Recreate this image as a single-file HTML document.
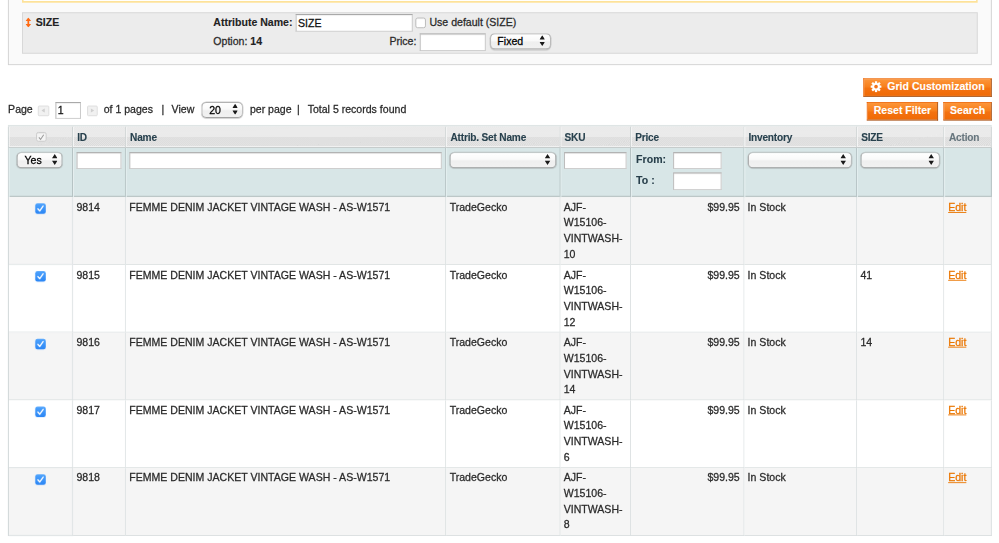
<!DOCTYPE html>
<html>
<head>
<meta charset="utf-8">
<title>Grid</title>
<style>
html,body{margin:0;padding:0;background:#fff;overflow:hidden;}
body{width:999px;height:543px;}
#clip{position:relative;width:999px;height:543px;overflow:hidden;}
#w{position:absolute;left:0;top:0;width:1135.2px;height:618px;transform:scale(0.88);transform-origin:0 0;
  font:12px/18px "Liberation Sans",Arial,Helvetica,sans-serif;color:#2a2a2a;-webkit-text-stroke-width:0.3px;}
#w *{box-sizing:border-box;}
#w b,#w th,#w .lbl,#w .btn,#w .bd{-webkit-text-stroke-width:0.12px;}
.abs{position:absolute;white-space:nowrap;}
/* top container */
#box{position:absolute;left:9.2px;top:-20px;width:1118.2px;height:94.4px;border:1.1px solid #d0d0d0;background:#fafafa;}
#ybox{position:absolute;left:25.2px;top:-20px;width:1086px;height:23px;background:#fffffd;box-shadow:inset 0 0 0 1.8px #fde29a;}
#gbox{position:absolute;left:25.2px;top:13.8px;width:1086px;height:47.2px;border:1px solid #d6d6d6;background:#ececec;}
input.t,.inp{position:absolute;background:#fff;border:1px solid #aaa;border-color:#9e9e9e #c4c4c4 #c8c8c8 #b4b4b4;box-shadow:inset 0 1px 1px rgba(0,0,0,.08);}
.sel{position:absolute;border:1px solid #a6a6a6;border-color:#adadad #a8a8a8 #9c9c9c #a8a8a8;border-radius:5.5px;
  background:linear-gradient(#ffffff 0%,#f9f9f9 45%,#efefef 55%,#f1f1f1 100%);box-shadow:0 0 0 .6px rgba(160,160,160,.5),0 1px 1.2px rgba(0,0,0,.1);
  font-size:12px;line-height:16px;color:#000;padding-left:7.6px;white-space:nowrap;}
.sel svg{position:absolute;right:5.2px;top:50%;margin-top:-6.8px;width:6.4px;height:12.4px;}
.cb{position:absolute;width:12px;height:12px;border-radius:2.6px;}
.cb.off{background:#fff;border:1px solid #b5b5b5;box-shadow:inset 0 1px 1px rgba(0,0,0,.06);}
.cb.on{background:linear-gradient(#4ea3fd,#2b86f5);}
.cb svg{position:absolute;left:0;top:0;width:12px;height:12px;}
/* buttons */
.btn{position:absolute;height:21px;border:1px solid #ed6502;border-color:#ed6502 #a04300 #a04300 #ed6502;
  background:linear-gradient(#fc9539 0%,#f8801c 45%,#f47210 55%,#f06a06 100%);color:#fff;font:bold 12px/17px "Liberation Sans",Arial,sans-serif;
  padding:1px 7px 2px 7px;white-space:nowrap;text-align:center;}
/* grid */
#grid{position:absolute;left:8.7px;top:144.1px;width:1117.5px;border-collapse:separate;border-spacing:0;table-layout:fixed;
  border:1px solid #c3cbcd;border-top:0;border-right:0;border-bottom:0;}
#grid td,#grid th{border-right:1px solid #dadfe0;border-bottom:1px solid #dadfe0;padding:2px 4px;vertical-align:top;text-align:left;font-weight:normal;overflow:hidden;}
#grid tr.h th{height:24.4px;padding:4.1px 4px 0 4.9px;font-size:11.5px;letter-spacing:-.22px;font-weight:bold;color:#27404d;line-height:17px;
  border-right:1px solid #c9cfcf;border-bottom:1.6px solid #bcc3c3;box-shadow:inset 1px 0 0 #f6f6f6, inset 0 -1px 0 #f3f3f3;
  background:
   repeating-linear-gradient(135deg,rgba(255,255,255,0) 0,rgba(255,255,255,0) .8035px,rgba(255,255,255,.3) .8035px,rgba(255,255,255,.3) 1.607px),
   linear-gradient(#e7e7e7 0,#e7e7e7 50%,#dadada 51%,#dbdbdb 100%);}
#grid tr.h th.nl{color:#67767e;}
#grid tr.f td{height:56px;background:#d8e6e7;border-right:1px solid #b0bdbe;border-bottom:0;box-shadow:inset 1px 0 0 #e6f0f1,inset 0 -1.5px 0 #bcc7c7;position:relative;padding:0;}
#grid tr.d td{height:76.85px;background:#fff;padding-top:3.2px;padding-bottom:0;line-height:17.8px;}
#grid tr.d.e td{background:#f5f5f5;}
#grid td.r{text-align:right;}
#grid td.c{text-align:center;position:relative;}
#grid a{color:#ea7601;text-decoration:underline;}
.lbl{position:absolute;font-weight:bold;color:#273e4a;}
.pbtn{position:absolute;width:12.6px;height:12px;border:1px solid #dcdcdc;background:#f1f1f1;border-radius:1.5px;}
</style>
</head>
<body>
<div id="clip">
<div id="w">

<div id="box"></div>
<div id="ybox"></div>
<div id="gbox"></div>

<svg class="abs" style="left:29.2px;top:20px;width:6.4px;height:11.2px" viewBox="0 0 64 112"><path d="M32 0 L64 40 L42 40 L42 72 L64 72 L32 112 L0 72 L22 72 L22 40 L0 40 Z" fill="#ff6a13"/></svg>
<div class="abs" style="left:40.6px;top:17px;font-weight:bold;-webkit-text-stroke-width:0.12px;color:#222;">SIZE</div>
<div class="abs" style="left:242.4px;top:17px;font-weight:bold;-webkit-text-stroke-width:0.12px;color:#222;">Attribute Name:</div>
<div class="inp" style="left:336.4px;top:16.4px;width:132.4px;height:19.6px;"></div>
<div class="abs" style="left:338.6px;top:17.6px;color:#111;">SIZE</div>
<div class="cb off" style="left:472.3px;top:20.4px;"></div>
<div class="abs" style="left:488px;top:16.9px;">Use default (SIZE)</div>
<div class="abs" style="left:242.4px;top:37.9px;">Option: <b style="color:#222">14</b></div>
<div class="abs" style="left:442.5px;top:37.7px;">Price:</div>
<div class="inp" style="left:476.8px;top:38.2px;width:75.2px;height:19.4px;"></div>
<div class="sel" style="left:556.6px;top:38.2px;width:69px;height:18px;">Fixed<svg viewBox="0 0 6 12"><path d="M3 0 L6 4.6 L0 4.6 Z M0 7.4 L6 7.4 L3 12 Z" fill="#1a1a1a"/></svg></div>

<!-- buttons -->
<div class="btn" style="left:981px;top:88.5px;width:146.2px;padding-left:26px;padding-top:0.7px;">Grid Customization</div>
<svg class="abs" style="left:989.4px;top:92.1px;width:13px;height:13px" viewBox="-10 -10 20 20">
 <g fill="#fff"><g id="t"><rect x="-2" y="-9.6" width="4" height="19.2" rx=".6"/></g><use href="#t" transform="rotate(45)"/><use href="#t" transform="rotate(90)"/><use href="#t" transform="rotate(135)"/><circle r="6.6"/></g>
 <circle r="3.2" fill="#f4741a"/>
</svg>
<div class="btn" style="left:984.8px;top:115.7px;width:81.4px;">Reset Filter</div>
<div class="btn" style="left:1071.6px;top:115.7px;width:55.6px;">Search</div>

<!-- pager -->
<div class="abs" style="left:9.2px;top:114.7px;">Page</div>
<div class="pbtn" style="left:43.4px;top:119.6px;"><svg style="position:absolute;left:3px;top:2.5px;width:4px;height:5px" viewBox="0 0 4 5"><path d="M4 0 L0 2.5 L4 5Z" fill="#d0d0d0"/></svg></div>
<div class="inp" style="left:62.6px;top:115.7px;width:29.8px;height:19.8px;"></div>
<div class="abs" style="left:65.6px;top:115.8px;color:#111;">1</div>
<div class="pbtn" style="left:98.8px;top:119.6px;"><svg style="position:absolute;left:3.6px;top:2.5px;width:4px;height:5px" viewBox="0 0 4 5"><path d="M0 0 L4 2.5 L0 5Z" fill="#d0d0d0"/></svg></div>
<div class="abs" style="left:117.8px;top:114.7px;">of 1 pages</div>
<div class="abs" style="left:183.4px;top:114.7px;">|</div>
<div class="abs" style="left:195px;top:114.7px;">View</div>
<div class="sel" style="left:229.2px;top:115.5px;width:47px;height:18.6px;line-height:16.6px;">20<svg viewBox="0 0 6 12"><path d="M3 0 L6 4.6 L0 4.6 Z M0 7.4 L6 7.4 L3 12 Z" fill="#1a1a1a"/></svg></div>
<div class="abs" style="left:284px;top:114.7px;">per page</div>
<div class="abs" style="left:337.4px;top:114.7px;">|</div>
<div class="abs" style="left:349.6px;top:114.7px;">Total 5 records found</div>

<!-- grid -->
<div class="abs" style="left:8.7px;top:142.1px;width:1118.5px;height:2px;background:#dfe5e5;"></div>
<table id="grid">
<colgroup><col style="width:73.2px"><col style="width:60px"><col style="width:364.1px"><col style="width:129.6px"><col style="width:80.3px"><col style="width:128.7px"><col style="width:128.2px"><col style="width:99.7px"><col style="width:53.7px"></colgroup>
<tr class="h">
 <th class="c"><div class="cb off" style="left:31.2px;top:5.6px;width:11.8px;height:11.8px;background:#f4f4f4;border-color:#c8c8c8"><svg viewBox="0 0 12 12" style="left:-1px;top:-1px;width:11.8px;height:11.8px"><path d="M3.2 6.2 L5.2 8.6 L8.8 3.2" fill="none" stroke="#9a9a9a" stroke-width="1.2"/></svg></div></th>
 <th>ID</th><th>Name</th><th>Attrib. Set Name</th><th>SKU</th><th>Price</th><th>Inventory</th><th>SIZE</th><th class="nl">Action</th>
</tr>
<tr class="f">
 <td><div id="yes_sel" class="sel" style="left:9.6px;top:4.1px;width:52.2px;height:18.8px;line-height:16.8px;">Yes<svg viewBox="0 0 6 12"><path d="M3 0 L6 4.6 L0 4.6 Z M0 7.4 L6 7.4 L3 12 Z" fill="#1a1a1a"/></svg></div></td>
 <td><div id="id_inp" class="inp" style="left:4.2px;top:4.5px;width:51px;height:19.2px;"></div></td>
 <td><div id="name_inp" class="inp" style="left:4.2px;top:4.5px;width:355px;height:19.2px;"></div></td>
 <td><div id="attr_sel" class="sel" style="left:4.2px;top:4.1px;width:120.6px;height:18.8px;line-height:16.8px;">&nbsp;<svg viewBox="0 0 6 12"><path d="M3 0 L6 4.6 L0 4.6 Z M0 7.4 L6 7.4 L3 12 Z" fill="#1a1a1a"/></svg></div></td>
 <td><div id="sku_inp" class="inp" style="left:4.2px;top:4.5px;width:71px;height:19.2px;"></div></td>
 <td><div class="lbl" style="left:6px;top:3.8px;">From:</div><div id="from_inp" class="inp" style="left:48.6px;top:4.5px;width:55px;height:19.2px;"></div>
     <div class="lbl" style="left:6px;top:27.1px;">To :</div><div id="to_inp" class="inp" style="left:48.6px;top:27.5px;width:55px;height:19.6px;"></div></td>
 <td><div id="inv_sel" class="sel" style="left:4.2px;top:4.1px;width:118px;height:18.8px;line-height:16.8px;">&nbsp;<svg viewBox="0 0 6 12"><path d="M3 0 L6 4.6 L0 4.6 Z M0 7.4 L6 7.4 L3 12 Z" fill="#1a1a1a"/></svg></div></td>
 <td><div id="size_sel" class="sel" style="left:4.2px;top:4.1px;width:90px;height:18.8px;line-height:16.8px;">&nbsp;<svg viewBox="0 0 6 12"><path d="M3 0 L6 4.6 L0 4.6 Z M0 7.4 L6 7.4 L3 12 Z" fill="#1a1a1a"/></svg></div></td>
 <td></td>
</tr>
<tr class="d e">
 <td class="c"><div class="cb on" style="left:30.4px;top:6.7px;"><svg viewBox="0 0 12 12"><path d="M3 6.3 L5.1 8.8 L9 3.2" fill="none" stroke="#fff" stroke-width="1.5" stroke-linecap="round" stroke-linejoin="round"/></svg></div></td>
 <td>9814</td><td>FEMME DENIM JACKET VINTAGE WASH - AS-W1571</td><td>TradeGecko</td><td>AJF-<br>W15106-<br>VINTWASH-<br>10</td><td class="r">$99.95</td><td>In Stock</td><td></td><td><a>Edit</a></td>
</tr>
<tr class="d">
 <td class="c"><div class="cb on" style="left:30.4px;top:6.7px;"><svg viewBox="0 0 12 12"><path d="M3 6.3 L5.1 8.8 L9 3.2" fill="none" stroke="#fff" stroke-width="1.5" stroke-linecap="round" stroke-linejoin="round"/></svg></div></td>
 <td>9815</td><td>FEMME DENIM JACKET VINTAGE WASH - AS-W1571</td><td>TradeGecko</td><td>AJF-<br>W15106-<br>VINTWASH-<br>12</td><td class="r">$99.95</td><td>In Stock</td><td>41</td><td><a>Edit</a></td>
</tr>
<tr class="d e">
 <td class="c"><div class="cb on" style="left:30.4px;top:6.7px;"><svg viewBox="0 0 12 12"><path d="M3 6.3 L5.1 8.8 L9 3.2" fill="none" stroke="#fff" stroke-width="1.5" stroke-linecap="round" stroke-linejoin="round"/></svg></div></td>
 <td>9816</td><td>FEMME DENIM JACKET VINTAGE WASH - AS-W1571</td><td>TradeGecko</td><td>AJF-<br>W15106-<br>VINTWASH-<br>14</td><td class="r">$99.95</td><td>In Stock</td><td>14</td><td><a>Edit</a></td>
</tr>
<tr class="d">
 <td class="c"><div class="cb on" style="left:30.4px;top:6.7px;"><svg viewBox="0 0 12 12"><path d="M3 6.3 L5.1 8.8 L9 3.2" fill="none" stroke="#fff" stroke-width="1.5" stroke-linecap="round" stroke-linejoin="round"/></svg></div></td>
 <td>9817</td><td>FEMME DENIM JACKET VINTAGE WASH - AS-W1571</td><td>TradeGecko</td><td>AJF-<br>W15106-<br>VINTWASH-<br>6</td><td class="r">$99.95</td><td>In Stock</td><td></td><td><a>Edit</a></td>
</tr>
<tr class="d e">
 <td class="c"><div class="cb on" style="left:30.4px;top:6.7px;"><svg viewBox="0 0 12 12"><path d="M3 6.3 L5.1 8.8 L9 3.2" fill="none" stroke="#fff" stroke-width="1.5" stroke-linecap="round" stroke-linejoin="round"/></svg></div></td>
 <td>9818</td><td>FEMME DENIM JACKET VINTAGE WASH - AS-W1571</td><td>TradeGecko</td><td>AJF-<br>W15106-<br>VINTWASH-<br>8</td><td class="r">$99.95</td><td>In Stock</td><td></td><td><a>Edit</a></td>
</tr>
</table>

</div>
</div>
</body>
</html>
